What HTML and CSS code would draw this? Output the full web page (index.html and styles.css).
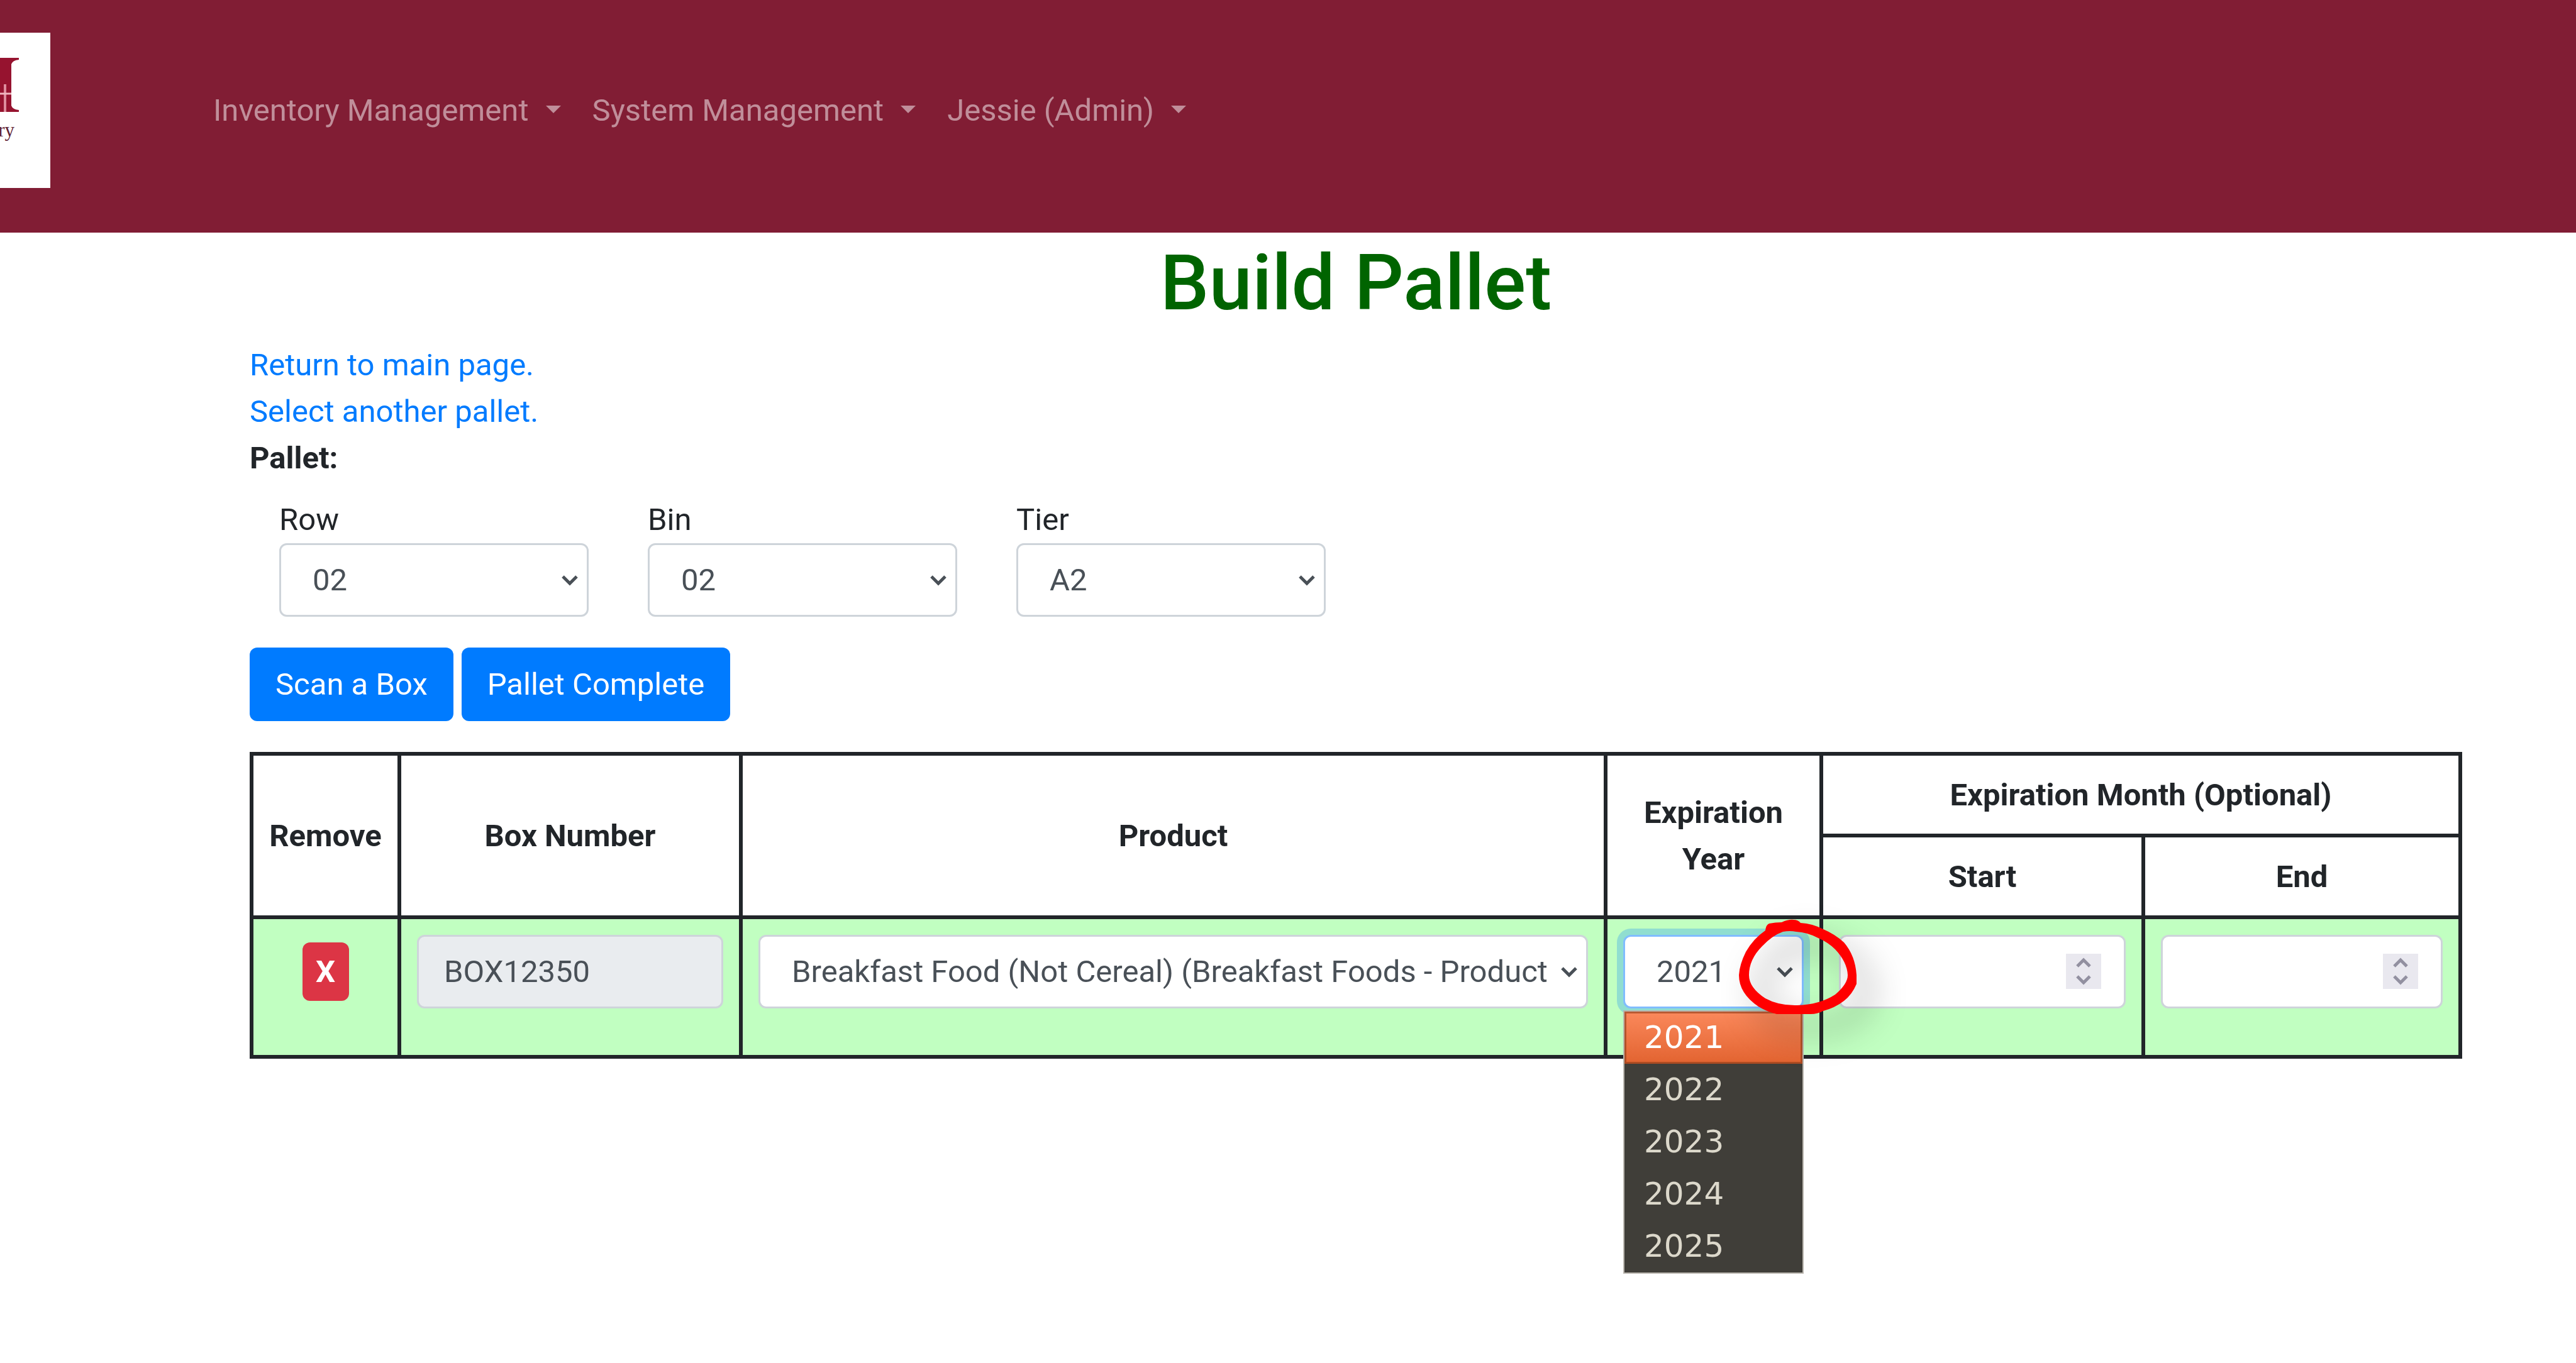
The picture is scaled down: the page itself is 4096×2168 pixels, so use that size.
FILE: index.html
```html
<!DOCTYPE html>
<html lang="en">
<head>
<meta charset="utf-8">
<title>Build Pallet</title>
<link rel="stylesheet" href="styles.css">
</head>
<body>
<header class="navbar">
  <a class="brand" href="#" aria-label="Home">
    <svg class="brand-mark" viewBox="0 0 80 247" aria-hidden="true">
      <path fill="#96132f" d="M0 40H30V43Q20 44 18 50V116Q20 122 30 123V126H0Z"/>
      <path fill="none" stroke="#dd8c9c" stroke-width="4" d="M8 82V126"/>
      <path fill="none" stroke="#f0b6c0" stroke-width="3" d="M0 97H18"/>
    </svg>
    <span class="brand-text">ry</span>
  </a>
  <nav>
    <ul class="nav">
      <li><a class="nav-link" href="#">Inventory Management </a></li>
      <li><a class="nav-link" href="#">System Management </a></li>
      <li><a class="nav-link" href="#">Jessie (Admin) </a></li>
    </ul>
  </nav>
</header>
<main class="page">
  <h1>Build Pallet</h1>
  <a class="page-link" href="#">Return to main page.</a>
  <a class="page-link" href="#">Select another pallet.</a>
  <div class="caption">Pallet:</div>
  <div class="location">
    <div class="field">
      <label for="row">Row</label>
      <div class="select-wrap"><select class="control" id="row"><option>02</option></select><svg class="chevron" viewBox="0 0 26 18"><path d="M2 3L13 14L24 3"/></svg></div>
    </div>
    <div class="field">
      <label for="bin">Bin</label>
      <div class="select-wrap"><select class="control" id="bin"><option>02</option></select><svg class="chevron" viewBox="0 0 26 18"><path d="M2 3L13 14L24 3"/></svg></div>
    </div>
    <div class="field">
      <label for="tier">Tier</label>
      <div class="select-wrap"><select class="control" id="tier"><option>A2</option></select><svg class="chevron" viewBox="0 0 26 18"><path d="M2 3L13 14L24 3"/></svg></div>
    </div>
  </div>
  <div class="actions">
    <button class="btn" type="button">Scan a Box</button>
    <button class="btn" type="button">Pallet Complete</button>
  </div>
  <table class="boxes">
    <colgroup><col class="c-remove"><col class="c-box"><col class="c-product"><col class="c-year"><col class="c-start"><col class="c-end"></colgroup>
    <thead>
      <tr>
        <th rowspan="2">Remove</th>
        <th rowspan="2">Box Number</th>
        <th rowspan="2">Product</th>
        <th rowspan="2">Expiration Year</th>
        <th colspan="2">Expiration Month (Optional)</th>
      </tr>
      <tr><th>Start</th><th>End</th></tr>
    </thead>
    <tbody>
      <tr>
        <td class="remove"><button class="btn-remove" type="button">X</button></td>
        <td><input class="control readonly" type="text" value="BOX12350" readonly aria-label="Box Number"></td>
        <td><div class="select-wrap"><select class="control" aria-label="Product"><option>Breakfast Food (Not Cereal) (Breakfast Foods - Product</option></select><svg class="chevron" viewBox="0 0 26 18"><path d="M2 3L13 14L24 3"/></svg></div></td>
        <td>
          <div class="select-wrap">
            <select class="control focused" aria-label="Expiration Year"><option>2021</option><option>2022</option><option>2023</option><option>2024</option><option>2025</option></select><svg class="chevron" viewBox="0 0 26 18"><path d="M2 3L13 14L24 3"/></svg>
            <ul class="options">
              <li class="active">2021</li><li>2022</li><li>2023</li><li>2024</li><li>2025</li>
            </ul>
            <svg class="marker" viewBox="0 0 300 300" aria-hidden="true">
              <path fill="#f00" fill-rule="evenodd" d="M71 53Q72 44 77 42Q87 40 97 40Q108 35 116 36Q123 36 127 41Q146 42 163 51Q182 59 196 72Q214 93 216 124V138Q209 155 196 165Q182 176 163 181Q154 186 143 186H89Q73 182 60 174Q29 153 29 124Q30 107 40 87Q52 66 71 53ZM99 55Q110 53 120 55Q138 56 155 65Q171 72 182 83Q201 103 202 124Q202 138 182 155Q157 171 122 172Q93 173 71 161Q45 144 45 124Q45 99 66 78Q82 61 99 55Z"/>
            </svg>
          </div>
        </td>
        <td><div class="number-wrap"><input class="control" type="number" aria-label="Expiration Month Start"><svg class="spinner" viewBox="0 0 56 56"><path d="M18 20L28 10L38 20M18 36L28 46L38 36"/></svg></div></td>
        <td><div class="number-wrap"><input class="control" type="number" aria-label="Expiration Month End"><svg class="spinner" viewBox="0 0 56 56"><path d="M18 20L28 10L38 20M18 36L28 46L38 36"/></svg></div></td>
      </tr>
    </tbody>
  </table>
</main>
</body>
</html>
```
FILE: styles.css
```css
*, *::before, *::after { box-sizing: border-box; }
body {
  min-height: 100vh;
  margin: 0;
  background: #fff;
  color: #212529;
  font-family: Roboto, "Liberation Sans", sans-serif;
  font-size: 49px;
  line-height: 74px;
}
.navbar {
  display: flex;
  align-items: flex-start;
  gap: 234px;
  min-height: 370px;
  padding-top: 52px;
  background: #811d34;
}
.brand {
  position: relative;
  width: 80px;
  height: 247px;
  background: #fff;
  overflow: hidden;
}
.brand-mark { display: block; width: 80px; height: 247px; }
.brand-text {
  position: absolute;
  right: 57px;
  top: 135px;
  font: 31px/40px "Liberation Serif", serif;
  color: #5f2335;
}
.nav {
  display: flex;
  margin: 0;
  padding: 62px 0 0;
  list-style: none;
}
.nav-link {
  display: block;
  padding: 25px;
  color: rgba(255, 255, 255, .5);
  text-decoration: none;
  white-space: pre;
}
.nav-link::after {
  content: "";
  display: inline-block;
  margin-left: 15px;
  vertical-align: 12px;
  border: 12px solid transparent;
  border-top-color: currentColor;
  border-bottom: 0;
}
.page {
  min-height: calc(100vh - 370px);
  padding: 0 181px 0 397px;
}
h1 {
  margin: 0 0 20px;
  padding-top: 6px;
  color: #006400;
  font-size: 123px;
  line-height: 148px;
  font-weight: 500;
  text-align: center;
}
.page-link {
  display: block;
  width: fit-content;
  color: #007bff;
  text-decoration: none;
}
.caption { font-weight: 700; }
.location {
  display: flex;
  gap: 94px;
  padding: 24px 47px 0;
}
.field { width: 492px; }
.field label { display: block; }
.select-wrap, .number-wrap { position: relative; }
.control {
  display: block;
  appearance: none;
  width: 100%;
  height: 117px;
  margin: 0;
  padding: 18px 40px;
  border: 3px solid #ced4da;
  border-radius: 12px;
  background: #fff;
  color: #495057;
  font: inherit;
}
select.control { padding: 18px 50px; }
.readonly { background: #e9ecef; }
.focused {
  border-color: #80bdff;
  box-shadow: 0 0 0 10px rgba(0, 123, 255, .25);
}
.control::-webkit-inner-spin-button { display: none; }
.chevron {
  position: absolute;
  right: 17px;
  top: 50px;
  width: 26px;
  height: 18px;
  fill: none;
  stroke: #495057;
  stroke-width: 5;
}
.spinner {
  position: absolute;
  right: 39px;
  top: 30px;
  width: 56px;
  height: 56px;
  background: #e9e8ef;
  fill: none;
  stroke: #9290a0;
  stroke-width: 5;
}
.actions {
  display: flex;
  gap: 13px;
  padding: 49px 0;
}
.btn {
  height: 117px;
  padding: 0 41px;
  border: 0;
  border-radius: 12px;
  background: #007bff;
  color: #fff;
  font: inherit;
}
.boxes {
  width: 100%;
  table-layout: fixed;
  border-collapse: collapse;
}
.boxes th, .boxes td {
  padding: 25px;
  border: 6px solid #212529;
}
.boxes th {
  padding: 26px 25px 24px;
  text-align: center;
}
.boxes td {
  padding-bottom: 74px;
  background: #c1ffc1;
  vertical-align: top;
}
.boxes th:first-child { padding-left: 0; padding-right: 0; }
.c-remove { width: 235px; }
.c-box { width: 543px; }
.c-year { width: 343px; }
.c-start { width: 512px; }
.c-end { width: 504px; }
.boxes .remove { padding-top: 37px; text-align: center; }
.btn-remove {
  display: block;
  width: 74px;
  height: 93px;
  margin: 0 auto;
  padding: 0;
  border: 0;
  border-radius: 12px;
  background: #dc3545;
  color: #fff;
  font: inherit;
  font-weight: 700;
}
.options {
  position: absolute;
  z-index: 1;
  top: 120px;
  left: 0;
  width: 100%;
  margin: 0;
  padding: 0;
  border: 2px solid #b9b5ae;
  background: #403e39;
  color: #dcd8cb;
  font: 50px/83px "DejaVu Sans", sans-serif;
  list-style: none;
}
.options li { padding-left: 31px; }
.options .active {
  background: linear-gradient(#fb895c, #e26330);
  box-shadow: inset 0 0 0 3px rgba(140, 60, 25, .6);
  color: #fff;
}
.marker {
  position: absolute;
  z-index: 2;
  left: 155px;
  top: -60px;
  width: 300px;
  height: 300px;
  filter: drop-shadow(25px 28px 26px rgba(0, 0, 0, .32));
  pointer-events: none;
}
```
